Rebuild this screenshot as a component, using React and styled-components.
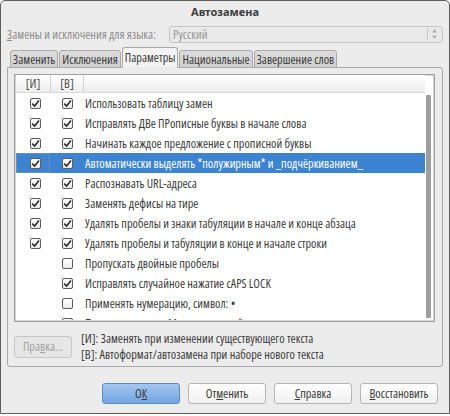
import React from 'react'
import styled, { createGlobalStyle } from 'styled-components'

const GlobalStyle = createGlobalStyle`
  html, body {
    margin: 0;
    padding: 0;
    background: #ffffff;
  }
  body {
    font-family: "Open Sans", "Noto Sans", sans-serif;
    font-stretch: condensed;
    font-size: 12.3px;
    color: #3c3c3c;
  }
`

const rows = [
  { i: true, b: true, text: 'Использовать таблицу замен' },
  { i: true, b: true, text: 'Исправлять ДВе ПРописные буквы в начале слова' },
  { i: true, b: true, text: 'Начинать каждое предложение с прописной буквы' },
  { i: true, b: true, text: 'Автоматически выделять *полужирным* и _подчёркиванием_', selected: true },
  { i: true, b: true, text: 'Распознавать URL-адреса' },
  { i: true, b: true, text: 'Заменять дефисы на тире' },
  { i: true, b: true, text: 'Удалять пробелы и знаки табуляции в начале и конце абзаца' },
  { i: true, b: true, text: 'Удалять пробелы и табуляции в конце и начале строки' },
  { i: null, b: false, text: 'Пропускать двойные пробелы' },
  { i: null, b: true, text: 'Исправлять случайное нажатие cAPS LOCK' },
  { i: null, b: false, text: 'Применять нумерацию, символ: •' },
  { i: null, b: false, text: 'Применять стиль «Маркированный список»' },
]

const tabs = ['Заменить', 'Исключения', 'Параметры', 'Национальные', 'Завершение слов']

function Check({ checked }) {
  return (
    <Box>
      {checked && (
        <svg width="9" height="9" viewBox="0 0 9 9">
          <path d="M1.2 4.6 L3.6 7 L8 1.6" fill="none" stroke="#2e2e2e" strokeWidth="1.6" />
        </svg>
      )}
    </Box>
  )
}

export default function App() {
  return (
    <>
      <GlobalStyle />
      <Window>
        <TitleBar>Автозамена</TitleBar>
        <LangRow>
          <DimLabel><u>З</u>амены и исключения для языка:</DimLabel>
          <Combo>
            <span>Русский</span>
            <Spin>
              <svg width="7" height="12" viewBox="0 0 7 12">
                <path d="M3.5 1 L6 4.5 L1 4.5 Z" fill="#b0b0b0" />
                <path d="M3.5 11 L6 7.5 L1 7.5 Z" fill="#b0b0b0" />
              </svg>
            </Spin>
          </Combo>
        </LangRow>
        <TabBar>
          {tabs.map((t) => (
            <Tab key={t} $active={t === 'Параметры'}>{t}</Tab>
          ))}
        </TabBar>
        <Panel>
          <ListBox>
            <ListBody>
              <Header>
                <HeadCell $w={34}>[И]</HeadCell>
                <HeadCell $w={32}>[В]</HeadCell>
                <HeadRest />
              </Header>
              {rows.map((r) => (
                <Row key={r.text} $selected={r.selected}>
                  <Cell $w={34} $pad={5} $focus={r.selected}>{r.i !== null && <Check checked={r.i} />}</Cell>
                  <Cell $w={32} $pad={2}><Check checked={r.b} /></Cell>
                  <RowText>{r.text}</RowText>
                </Row>
              ))}
            </ListBody>
            <ScrollTrack>
              <Thumb />
            </ScrollTrack>
          </ListBox>
          <Footer>
            <EditButton disabled>Пра<u>в</u>ка...</EditButton>
            <Legend>
              <div>[И]: Заменять при изменении существующего текста</div>
              <div>[В]: Автоформат/автозамена при наборе нового текста</div>
            </Legend>
          </Footer>
        </Panel>
        <ButtonRow>
          <Button $primary>О<u>К</u></Button>
          <Button>От<u>м</u>енить</Button>
          <Button><u>С</u>правка</Button>
          <Button><u>В</u>осстановить</Button>
        </ButtonRow>
      </Window>
    </>
  )
}

const Window = styled.div`
  width: 450px;
  height: 414px;
  box-sizing: border-box;
  border: 1px solid #5e5e5e;
  border-radius: 5px 5px 0 0;
  background: #ececec;
  display: flex;
  flex-direction: column;
  overflow: hidden;
`

const TitleBar = styled.div`
  height: 22px;
  line-height: 22px;
  text-align: center;
  font-family: "Noto Sans", sans-serif;
  font-stretch: normal;
  font-weight: bold;
  color: #3c3c3c;
  font-size: 11px;
`

const LangRow = styled.div`
  display: flex;
  align-items: center;
  padding: 2px 6px 0 6px;
  height: 18px;
`

const DimLabel = styled.div`
  color: #8e8e8e;
  width: 162px;
  flex-shrink: 0;
  white-space: nowrap;
`

const Combo = styled.div`
  flex: 1;
  height: 17px;
  box-sizing: border-box;
  border: 1px solid #c4c4c4;
  border-radius: 3px;
  background: #e9e9e9;
  color: #9a9a9a;
  display: flex;
  align-items: center;
  justify-content: space-between;
  padding: 0 4px 0 3px;
`

const Spin = styled.div`
  display: flex;
  align-items: center;
  border-left: 1px solid #c8c8c8;
  padding-left: 3px;
  height: 12px;
`

const TabBar = styled.div`
  display: flex;
  align-items: flex-end;
  padding-left: 9px;
  margin-top: 5px;
  height: 20px;
  position: relative;
  z-index: 1;
  margin-bottom: -1px;
`

const Tab = styled.div`
  box-sizing: border-box;
  height: ${(p) => (p.$active ? '21px' : '18px')};
  line-height: ${(p) => (p.$active ? '20px' : '17px')};
  padding: 0 2px;
  margin-right: 1px;
  border: 1px solid #a9a9a9;
  border-bottom: ${(p) => (p.$active ? '1px solid #ececec' : '1px solid #a9a9a9')};
  border-radius: 3px 3px 0 0;
  background: ${(p) => (p.$active ? '#f3f3f3' : 'linear-gradient(#dcdcdc, #cfcfcf)')};
  color: #3c3c3c;
  white-space: nowrap;
`

const Panel = styled.div`
  margin: 0 6px;
  height: 300px;
  box-sizing: border-box;
  border: 1px solid #a9a9a9;
  border-radius: 0 3px 3px 3px;
  background: #ececec;
  padding: 6px 7px 0 6px;
`

const ListBox = styled.div`
  height: 248px;
  box-sizing: border-box;
  border: 1px solid #a0a0a0;
  box-shadow: inset 0 0 0 1px #d4d4d4;
  background: #ffffff;
  display: flex;
  overflow: hidden;
  padding: 0 1px 1px 1px;
`

const ListBody = styled.div`
  flex: 1;
  overflow: hidden;
`

const Header = styled.div`
  display: flex;
  height: 17px;
  background: linear-gradient(#ffffff, #ededed);
  border-bottom: 1px solid #d8d8d8;
  color: #4a4a4a;
`

const HeadCell = styled.div`
  width: ${(p) => p.$w}px;
  flex-shrink: 0;
  text-align: center;
  line-height: 17px;
  border-right: 1px solid #d2d2d2;
`

const HeadRest = styled.div`
  flex: 1;
`

const Row = styled.div`
  display: flex;
  align-items: center;
  height: 20px;
  background: ${(p) => (p.$selected ? '#3c83d2' : 'transparent')};
  color: ${(p) => (p.$selected ? '#ffffff' : '#3c3c3c')};
`

const Cell = styled.div`
  width: ${(p) => p.$w}px;
  flex-shrink: 0;
  height: 20px;
  box-sizing: border-box;
  display: flex;
  align-items: center;
  justify-content: center;
  padding-left: ${(p) => p.$pad}px;
  border: 1px solid ${(p) => (p.$focus ? '#6a8fb8' : 'transparent')};
`

const RowText = styled.div`
  padding-left: 3px;
  white-space: nowrap;
`

const Box = styled.div`
  width: 11px;
  height: 11px;
  box-sizing: border-box;
  border: 1px solid #5c5c5c;
  border-radius: 2px;
  background: linear-gradient(#ffffff, #ececec);
  display: flex;
  align-items: center;
  justify-content: center;
`

const ScrollTrack = styled.div`
  width: 8px;
  flex-shrink: 0;
  padding: 20px 2px 2px 1px;
  box-sizing: border-box;
  display: flex;
`

const Thumb = styled.div`
  flex: 1;
  background: #9e9e9e;
  border-radius: 1px;
`

const Footer = styled.div`
  display: flex;
  align-items: center;
  padding-top: 10px;
`

const EditButton = styled.button`
  width: 58px;
  height: 22px;
  flex-shrink: 0;
  box-sizing: border-box;
  border: 1px solid #c6c6c6;
  border-radius: 3px;
  background: #e6e6e6;
  color: #a2a2a2;
  font: inherit;
  padding: 0;
`

const Legend = styled.div`
  margin-left: 9px;
  display: flex;
  flex-direction: column;
  gap: 3px;
  line-height: 13px;
  white-space: nowrap;
`

const ButtonRow = styled.div`
  display: flex;
  justify-content: flex-end;
  gap: 8px;
  padding: 16px 11px 0 0;
`

const Button = styled.button`
  width: 78px;
  height: 21px;
  box-sizing: border-box;
  border: 1px solid ${(p) => (p.$primary ? '#5a8bc6' : '#b5b5b5')};
  border-radius: 3px;
  background: ${(p) => (p.$primary ? 'linear-gradient(#a3c7f0, #73a5e0)' : 'linear-gradient(#ffffff, #f0f0f0)')};
  color: #3c3c3c;
  font: inherit;
  padding: 0;
`
